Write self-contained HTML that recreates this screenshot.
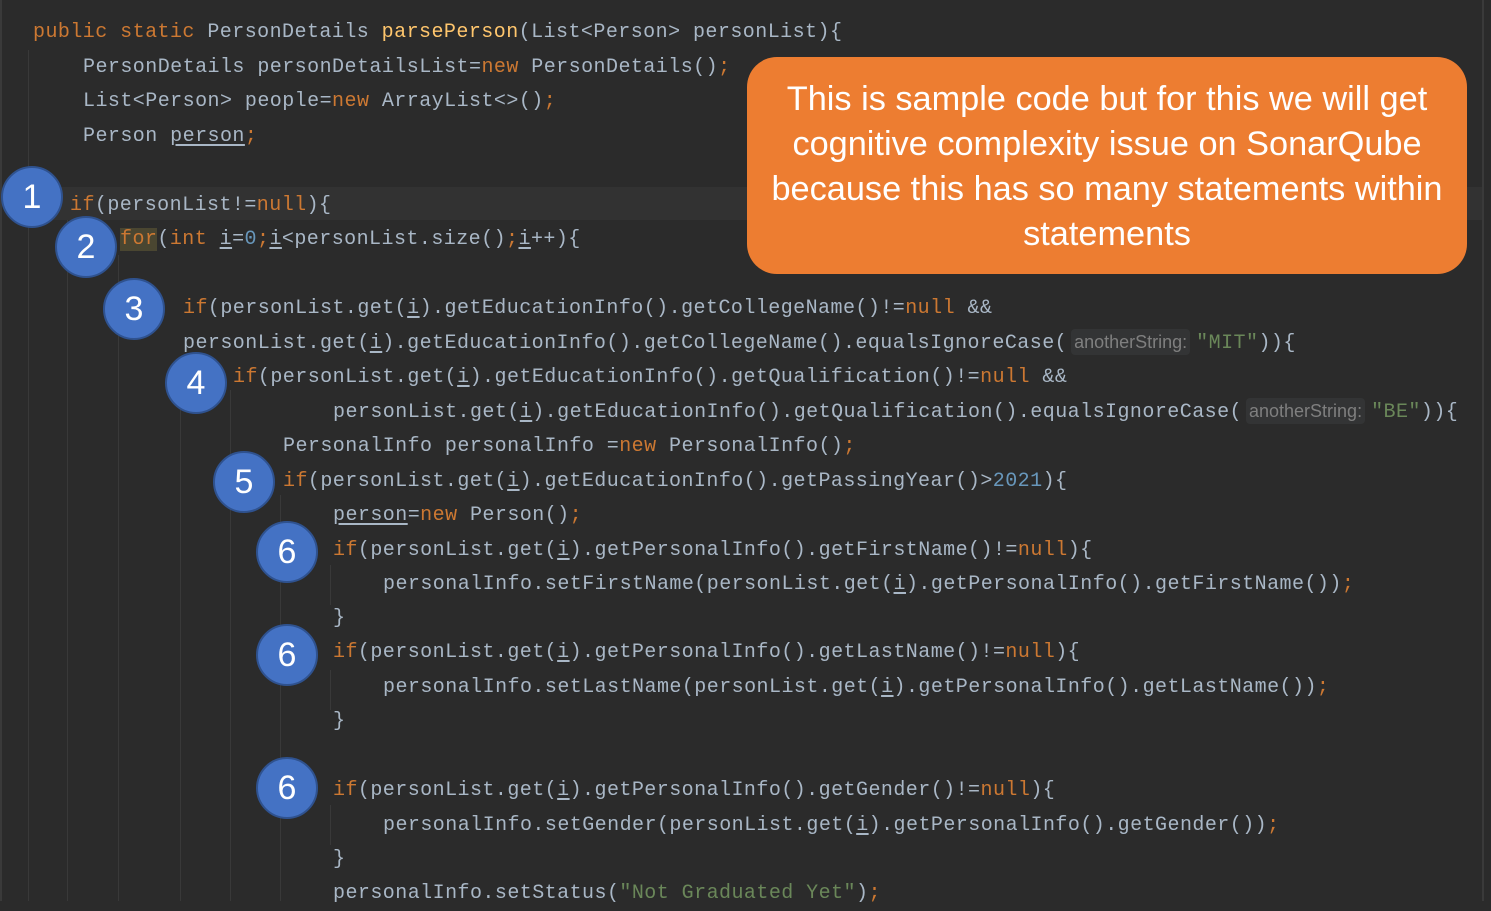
<!DOCTYPE html>
<html><head><meta charset="utf-8"><style>
body{margin:0;width:1491px;height:901px;background:#2b2b2b;overflow:hidden;position:relative;font-family:"Liberation Mono",monospace;}
.l{position:absolute;font-size:20px;letter-spacing:0.45px;color:#a9b7c6;white-space:pre;line-height:34px;margin-top:2px;}
.k{color:#cc7832}.m{color:#ffc66d}.n{color:#6897bb}.s{color:#6a8759}.u{text-decoration:underline;text-underline-offset:3px}
.h{display:inline-block;font-family:"Liberation Sans",sans-serif;font-size:18px;letter-spacing:0;color:#7f7f7f;background:#333435;border-radius:4px;padding:0 3px;margin:0 6px 0 4px;line-height:26px;}
.g{position:absolute;width:1px;background:#393939;}
.c{position:absolute;width:58px;height:58px;border-radius:50%;background:#4472c4;border:2px solid #2f528f;color:#fff;font-family:"Liberation Sans",sans-serif;font-size:34px;text-align:center;line-height:58px;}
.call{position:absolute;left:747px;top:57px;width:720px;height:217px;background:#ed7d31;border-radius:30px;color:#fff;font-family:"Liberation Sans",sans-serif;font-size:34.3px;text-align:center;line-height:45px;box-sizing:border-box;padding-top:20px;}
</style></head><body>
<div style="position:absolute;left:0;top:0;width:2px;height:901px;background:#3a3a3a"></div>
<div style="position:absolute;left:1482px;top:0;width:2px;height:901px;background:#3a3a3a"></div>
<div style="position:absolute;left:30px;top:187px;width:1452px;height:33px;background:#323232"></div>
<div class="g" style="left:28px;top:50px;height:851px"></div>
<div class="g" style="left:67px;top:220px;height:681px"></div>
<div class="g" style="left:118px;top:255px;height:646px"></div>
<div class="g" style="left:180px;top:390px;height:511px"></div>
<div class="g" style="left:230px;top:390px;height:511px"></div>
<div class="g" style="left:280px;top:495px;height:406px"></div>
<div class="g" style="left:330px;top:565px;height:40px"></div>
<div class="g" style="left:330px;top:670px;height:40px"></div>
<div class="g" style="left:330px;top:805px;height:40px"></div>

<div class="l" style="left:33px;top:14px"><span class="k">public static</span> PersonDetails <span class="m">parsePerson</span>(List&lt;Person&gt; personList){</div>
<div class="l" style="left:83px;top:49px">PersonDetails personDetailsList=<span class="k">new</span> PersonDetails()<span class="k">;</span></div>
<div class="l" style="left:83px;top:83px">List&lt;Person&gt; people=<span class="k">new</span> ArrayList&lt;&gt;()<span class="k">;</span></div>
<div class="l" style="left:83px;top:118px">Person <span class="u">person</span><span class="k">;</span></div>
<div class="l" style="left:70px;top:187px"><span class="k">if</span>(personList!=<span class="k">null</span>){</div>
<div class="l" style="left:120px;top:221px"><span class="k" style="background:#4a4631">for</span>(<span class="k">int</span> <span class="u">i</span>=<span class="n">0</span><span class="k">;</span><span class="u">i</span>&lt;personList.size()<span class="k">;</span><span class="u">i</span>++){</div>
<div class="l" style="left:183px;top:290px"><span class="k">if</span>(personList.get(<span class="u">i</span>).getEducationInfo().getCollegeName()!=<span class="k">null</span> &amp;&amp;</div>
<div class="l" style="left:183px;top:325px">personList.get(<span class="u">i</span>).getEducationInfo().getCollegeName().equalsIgnoreCase(<span class="h">anotherString:</span><span class="s">"MIT"</span>)){</div>
<div class="l" style="left:233px;top:359px"><span class="k">if</span>(personList.get(<span class="u">i</span>).getEducationInfo().getQualification()!=<span class="k">null</span> &amp;&amp;</div>
<div class="l" style="left:333px;top:394px">personList.get(<span class="u">i</span>).getEducationInfo().getQualification().equalsIgnoreCase(<span class="h">anotherString:</span><span class="s">"BE"</span>)){</div>
<div class="l" style="left:283px;top:428px">PersonalInfo personalInfo =<span class="k">new</span> PersonalInfo()<span class="k">;</span></div>
<div class="l" style="left:283px;top:463px"><span class="k">if</span>(personList.get(<span class="u">i</span>).getEducationInfo().getPassingYear()&gt;<span class="n">2021</span>){</div>
<div class="l" style="left:333px;top:497px"><span class="u">person</span>=<span class="k">new</span> Person()<span class="k">;</span></div>
<div class="l" style="left:333px;top:532px"><span class="k">if</span>(personList.get(<span class="u">i</span>).getPersonalInfo().getFirstName()!=<span class="k">null</span>){</div>
<div class="l" style="left:383px;top:566px">personalInfo.setFirstName(personList.get(<span class="u">i</span>).getPersonalInfo().getFirstName())<span class="k">;</span></div>
<div class="l" style="left:333px;top:600px">}</div>
<div class="l" style="left:333px;top:634px"><span class="k">if</span>(personList.get(<span class="u">i</span>).getPersonalInfo().getLastName()!=<span class="k">null</span>){</div>
<div class="l" style="left:383px;top:669px">personalInfo.setLastName(personList.get(<span class="u">i</span>).getPersonalInfo().getLastName())<span class="k">;</span></div>
<div class="l" style="left:333px;top:703px">}</div>
<div class="l" style="left:333px;top:772px"><span class="k">if</span>(personList.get(<span class="u">i</span>).getPersonalInfo().getGender()!=<span class="k">null</span>){</div>
<div class="l" style="left:383px;top:807px">personalInfo.setGender(personList.get(<span class="u">i</span>).getPersonalInfo().getGender())<span class="k">;</span></div>
<div class="l" style="left:333px;top:841px">}</div>
<div class="l" style="left:333px;top:875px">personalInfo.setStatus(<span class="s">"Not Graduated Yet"</span>)<span class="k">;</span></div>

<div class="c" style="left:1px;top:166px">1</div>
<div class="c" style="left:55px;top:216px">2</div>
<div class="c" style="left:103px;top:278px">3</div>
<div class="c" style="left:165px;top:352px">4</div>
<div class="c" style="left:213px;top:451px">5</div>
<div class="c" style="left:256px;top:521px">6</div>
<div class="c" style="left:256px;top:624px">6</div>
<div class="c" style="left:256px;top:757px">6</div>

<div class="call">This is sample code but for this we will get<br>cognitive complexity issue on SonarQube<br>because this has so many statements within<br>statements</div>
</body></html>
